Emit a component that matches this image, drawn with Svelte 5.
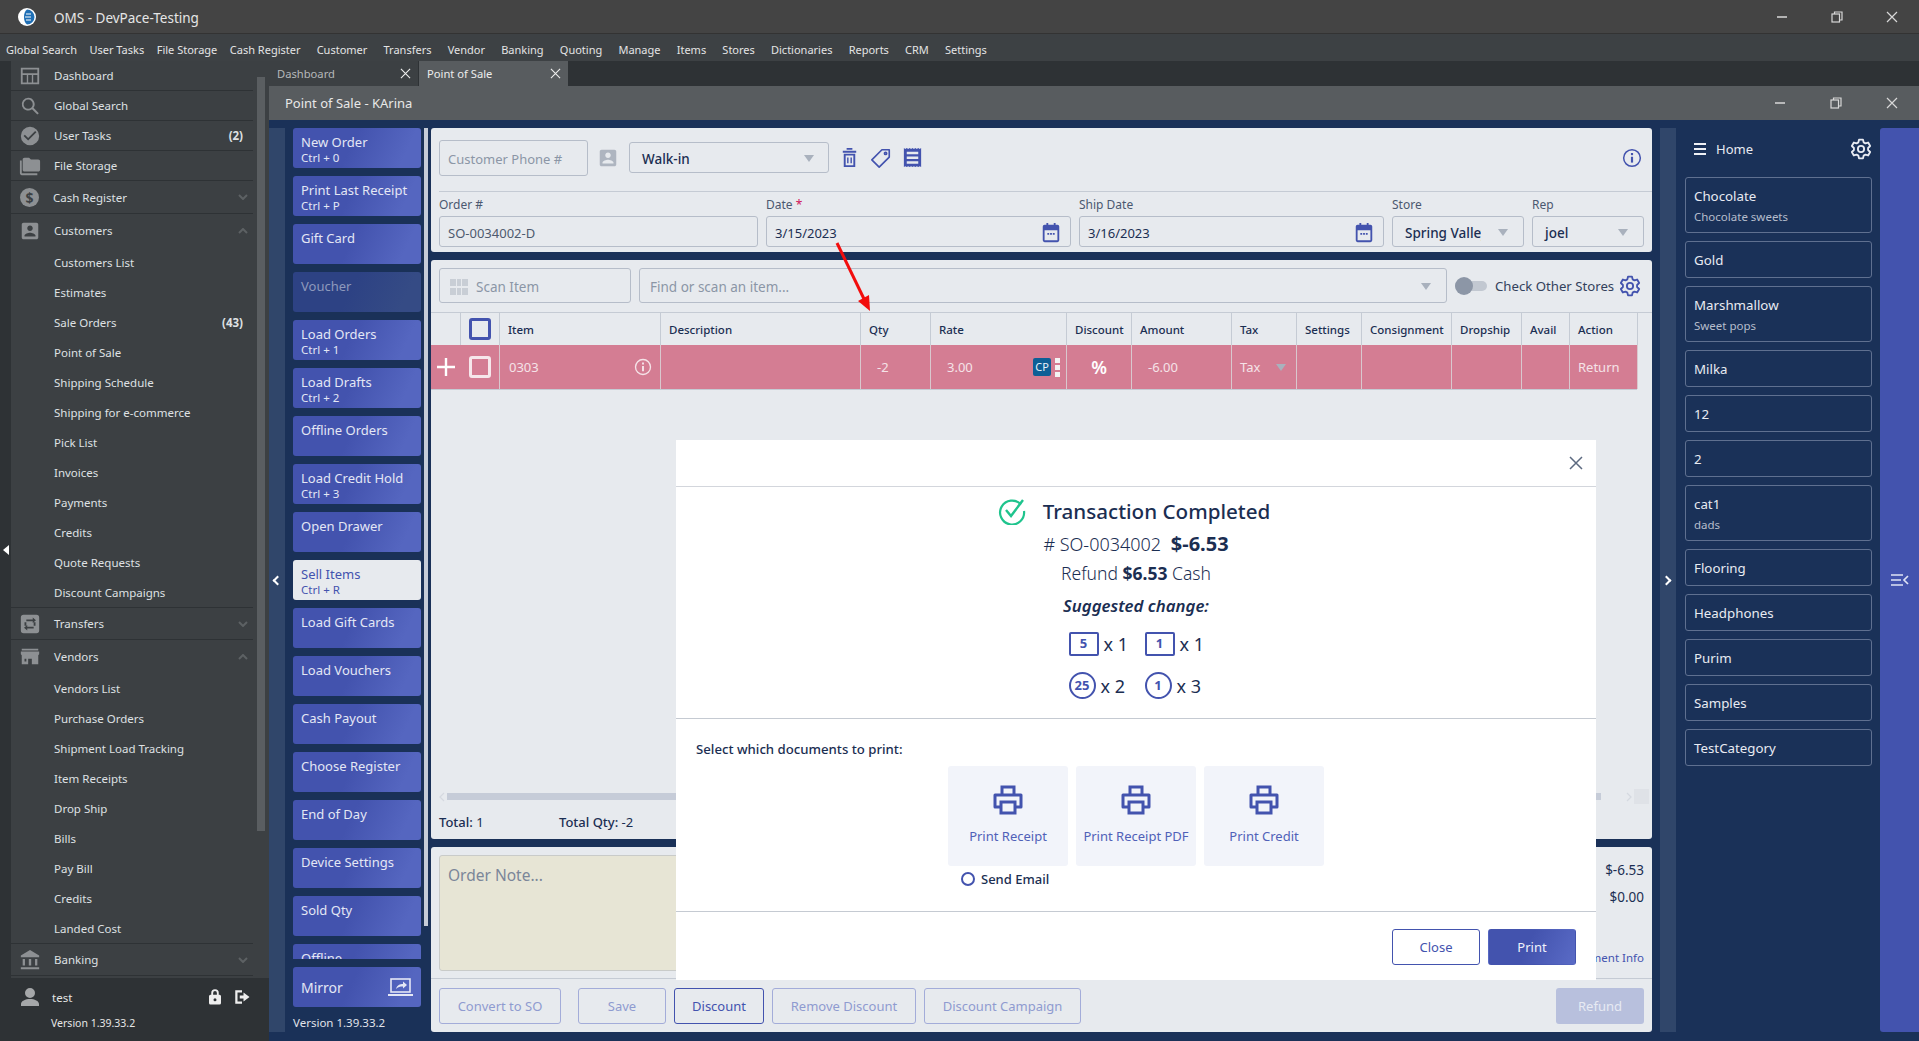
<script>
	const menu = ['Global Search','User Tasks','File Storage','Cash Register','Customer','Transfers','Vendor','Banking','Quoting','Manage','Items','Stores','Dictionaries','Reports','CRM','Settings'];

	const icons = {
		search: 'M10 3a7 7 0 1 0 4.2 12.6L20 21.4l1.6-1.6-5.8-5.8A7 7 0 0 0 10 3zm0 2a5 5 0 1 1 0 10 5 5 0 0 1 0-10z',
		check: 'M12 2a10 10 0 1 0 0 20 10 10 0 0 0 0-20zm-2 15l-5-5 1.4-1.4 3.6 3.6 7.6-7.6L19 8z',
		folder: 'M3 6H1v14c0 1.1.9 2 2 2h17v-2H3zM21 5h-8l-2-2H6C4.9 3 4 3.9 4 5v11c0 1.1.9 2 2 2h15c1.1 0 2-.9 2-2V7c0-1.1-.9-2-2-2z',
		person: 'M3 5v14c0 1.1.9 2 2 2h14c1.1 0 2-.9 2-2V5c0-1.1-.9-2-2-2H5C3.9 3 3 3.9 3 5zm12 4c0 1.7-1.3 3-3 3s-3-1.3-3-3 1.3-3 3-3 3 1.3 3 3zm-9 8c0-2 4-3.1 6-3.1s6 1.1 6 3.1v1H6z',
		dash: 'M2 3h20v18H2zm2 2v4h16V5zm0 6v8h4.5v-8zm6 0v8h4v-8zm5.500 0v8H20v-8z',
		transfer: 'M5 2h14a3 3 0 0 1 3 3v14a3 3 0 0 1-3 3H5a3 3 0 0 1-3-3V5a3 3 0 0 1 3-3zm3 5v2h7v2l3.500-3L15 5v2zm-2 3v4h2v-4zm10 0v4h2v-4zm-7 3l-3.500 3L9 19v-2h7v-2H9z',
		store: 'M3 3h18v2H3zm-1 3h20v3l-1 1v10h-7v-6H10v6H3V10L2 9zm4 8v3h2v-3z',
		bank: 'M12 1L2 7v2h20V7zM4 11v7h2.500v-7zm6.700 0v7h2.600v-7zm6.800 0v7H20v-7zM2 20v2h20v-2z',
		user: 'M12 3a5 5 0 1 1 0 10 5 5 0 0 1 0-10zm0 11c4.400 0 9 2 9 5v2H3v-2c0-3 4.600-5 9-5z',
		lock: 'M18 9h-1V6.500a5 5 0 0 0-10 0V9H6a2 2 0 0 0-2 2v9a2 2 0 0 0 2 2h12a2 2 0 0 0 2-2v-9a2 2 0 0 0-2-2zM9.500 6.500a2.500 2.500 0 0 1 5 0V9h-5zM12 17.500a2 2 0 1 1 0-4 2 2 0 0 1 0 4z',
		logout: 'M3 3h9v3H6v12h6v3H3zm11 3l8 6-8 6v-4H9v-4h5z',
		trash: 'M5 5h14v2H5zm4-3h6v2H9zM6 8h12v14H6zm2 2v10h8V10zm1.500 2h1.500v6H9.500zm3.500 0h1.500v6H13z',
		receipt: 'M3 2l1.500 1L6 2l1.500 1L9 2l1.500 1L12 2l1.500 1L15 2l1.500 1L18 2l1.500 1L21 2v20l-1.500-1-1.500 1-1.500-1-1.500 1-1.500-1-1.500 1-1.500-1L9 22l-1.500-1L6 22l-1.500-1L3 22zm3 4v2.500h12V6zm0 5v2.500h12V11zm0 5v2.500h12V16z',
		cal: 'M7 1h2v2h6V1h2v2h2a2 2 0 0 1 2 2v15a2 2 0 0 1-2 2H5a2 2 0 0 1-2-2V5a2 2 0 0 1 2-2h2zM5 9v11h14V9zm3 3h2v2H8zm3 0h2v2h-2zm3 0h2v2h-2z'
	};

	function gearPath(cx, cy, outer, inner, teeth) {
		const pts = [];
		const step = (Math.PI * 2) / teeth;
		for (let i = 0; i < teeth; i++) {
			const a = i * step - Math.PI / 2;
			for (const [off, r] of [[-0.36, inner], [-0.2, outer], [0.2, outer], [0.36, inner]]) {
				pts.push((cx + r * Math.cos(a + off * step)).toFixed(2) + ' ' + (cy + r * Math.sin(a + off * step)).toFixed(2));
			}
		}
		return 'M' + pts.join('L') + 'Z';
	}
	const gear = gearPath(12, 12, 10.5, 7.8, 6);

	const topRows = [
		{ label: 'Dashboard', icon: 'dash' },
		{ label: 'Global Search', icon: 'search' },
		{ label: 'User Tasks', icon: 'check', badge: '(2)' },
		{ label: 'File Storage', icon: 'folder' }
	];
	const customers = ['Customers List','Estimates','Sale Orders','Point of Sale','Shipping Schedule','Shipping for e-commerce','Pick List','Invoices','Payments','Credits','Quote Requests','Discount Campaigns'];
	const vendors = ['Vendors List','Purchase Orders','Shipment Load Tracking','Item Receipts','Drop Ship','Bills','Pay Bill','Credits','Landed Cost'];

	const actions = [
		{ t: 'New Order', s: 'Ctrl + 0' },
		{ t: 'Print Last Receipt', s: 'Ctrl + P' },
		{ t: 'Gift Card' },
		{ t: 'Voucher', off: true },
		{ t: 'Load Orders', s: 'Ctrl + 1' },
		{ t: 'Load Drafts', s: 'Ctrl + 2' },
		{ t: 'Offline Orders' },
		{ t: 'Load Credit Hold', s: 'Ctrl + 3' },
		{ t: 'Open Drawer' },
		{ t: 'Sell Items', s: 'Ctrl + R', on: true },
		{ t: 'Load Gift Cards' },
		{ t: 'Load Vouchers' },
		{ t: 'Cash Payout' },
		{ t: 'Choose Register' },
		{ t: 'End of Day' },
		{ t: 'Device Settings' },
		{ t: 'Sold Qty' },
		{ t: 'Offline' }
	];

	const columns = ['Item','Description','Qty','Rate','Discount','Amount','Tax','Settings','Consignment','Dropship','Avail','Action'];

	const categories = [
		{ t: 'Chocolate', s: 'Chocolate sweets' },
		{ t: 'Gold' },
		{ t: 'Marshmallow', s: 'Sweet pops' },
		{ t: 'Milka' },
		{ t: '12' },
		{ t: '2' },
		{ t: 'cat1', s: 'dads' },
		{ t: 'Flooring' },
		{ t: 'Headphones' },
		{ t: 'Purim' },
		{ t: 'Samples' },
		{ t: 'TestCategory' }
	];

	const prints = ['Print Receipt','Print Receipt PDF','Print Credit'];
</script>

{#snippet icon(name, size, cls)}
	<svg class={cls} width={size} height={size} viewBox="0 0 24 24"><path fill="currentColor" fill-rule="evenodd" d={icons[name]} /></svg>
{/snippet}

{#snippet gearIcon(size, cls)}
	<svg class={cls} width={size} height={size} viewBox="0 0 24 24" fill="none" stroke="currentColor" stroke-width="2" stroke-linejoin="round"><path d={gear} /><circle cx="12" cy="12" r="3.400" /></svg>
{/snippet}

{#snippet info(size, cls)}
	<svg class={cls} width={size} height={size} viewBox="0 0 24 24" fill="none" stroke="currentColor" stroke-width="1.800"><circle cx="12" cy="12" r="10" /><path d="M12 10.500v7" stroke-width="2.600" /><path d="M12 6v2.600" stroke-width="2.600" /></svg>
{/snippet}

{#snippet winControls()}
	<div class="win-controls">
		<svg width="14" height="14" viewBox="0 0 14 14"><path d="M2 7h10" stroke="currentColor" stroke-width="1.500" /></svg>
		<svg width="14" height="14" viewBox="0 0 14 14" fill="none" stroke="currentColor" stroke-width="1.200"><rect x="2" y="4" width="7.500" height="8" /><path d="M4.500 4V2h7.500v8h-2.500" /></svg>
		<svg width="14" height="14" viewBox="0 0 14 14"><path d="M2 2l10 10M12 2L2 12" stroke="currentColor" stroke-width="1.200" /></svg>
	</div>
{/snippet}

{#snippet chevron(up)}
	<svg class="chev" width="10" height="6" viewBox="0 0 10 6" fill="none" stroke="currentColor" stroke-width="2"><path d={up ? 'M1 5l4-4 4 4' : 'M1 1l4 4 4-4'} /></svg>
{/snippet}

<div class="app">
	<header class="titlebar">
		<svg class="logo" width="18" height="18" viewBox="0 0 18 18"><circle cx="9" cy="9" r="9" fill="#fff" /><path d="M9 1.500a7.500 7.500 0 0 1 0 15c-2-1.500-3-4-3-7.500S7 3 9 1.500z" fill="#1f6fb5" /><path d="M8 6h5M7 9h6M8 12h5" stroke="#fff" stroke-width="1.200" /></svg>
		<span class="app-name">OMS - DevPace-Testing</span>
		{@render winControls()}
	</header>

	<nav class="menubar">
		{#each menu as m}<span>{m}</span>{/each}
	</nav>

	<div class="shell">
		<aside class="nav">
			<div class="nav-top">
				<div class="nav-strip"><span class="strip-arrow"></span></div>
				<div class="nav-list">
					{#each topRows as r}
						<div class="row">
							{@render icon(r.icon, 22, 'row-icon')}
							<span class="row-label">{r.label}</span>
							{#if r.badge}<b class="badge">{r.badge}</b>{/if}
						</div>
					{/each}
					<div class="row group">
						<span class="dollar">$</span>
						<span class="row-label">Cash Register</span>
						{@render chevron(false)}
					</div>
					<div class="row group open">
						{@render icon('person', 22, 'row-icon')}
						<span class="row-label">Customers</span>
						{@render chevron(true)}
					</div>
					{#each customers as c}
						<div class="sub">
							<span>{c}</span>
							{#if c === 'Sale Orders'}<b class="badge">(43)</b>{/if}
						</div>
					{/each}
					<div class="row group top-line">
						{@render icon('transfer', 22, 'row-icon')}
						<span class="row-label">Transfers</span>
						{@render chevron(false)}
					</div>
					<div class="row group open">
						{@render icon('store', 22, 'row-icon')}
						<span class="row-label">Vendors</span>
						{@render chevron(true)}
					</div>
					{#each vendors as v}
						<div class="sub"><span>{v}</span></div>
					{/each}
					<div class="row group top-line">
						{@render icon('bank', 22, 'row-icon')}
						<span class="row-label">Banking</span>
						{@render chevron(false)}
					</div>
				</div>
				<div class="nav-scroll"><div class="nav-thumb"></div></div>
			</div>
			<div class="nav-foot">
				<div class="foot-user">
					{@render icon('user', 24, 'foot-avatar')}
					<span class="foot-name">test</span>
					{@render icon('lock', 18, 'foot-action')}
					{@render icon('logout', 18, 'foot-action')}
				</div>
				<div class="foot-version">Version 1.39.33.2</div>
			</div>
		</aside>

		<section class="window">
			<div class="tabs">
				<div class="tab">Dashboard<svg width="11" height="11" viewBox="0 0 12 12"><path d="M1 1l10 10M11 1L1 11" stroke="currentColor" stroke-width="1.200" /></svg></div>
				<div class="tab active">Point of Sale<svg width="11" height="11" viewBox="0 0 12 12"><path d="M1 1l10 10M11 1L1 11" stroke="currentColor" stroke-width="1.200" /></svg></div>
			</div>
			<div class="window-title">
				<span>Point of Sale - KArina</span>
				{@render winControls()}
			</div>

			<div class="pos">
				<div class="side-strip"><i class="chev-l"></i></div>

				<div class="actions">
					<div class="action-list">
						{#each actions as a}
							<div class="action" class:off={a.off} class:on={a.on}>
								<span class="a-title">{a.t}</span>
								{#if a.s}<span class="a-sub">{a.s}</span>{/if}
							</div>
						{/each}
					</div>
					<div class="action mirror">
						<span>Mirror</span>
						<svg width="25" height="20" viewBox="0 0 25 20" fill="none" stroke="currentColor" stroke-width="1.600"><rect x="3" y="2" width="19" height="13" /><path d="M0 18h25" stroke-width="2" /><path d="M8 12c1-4 4-5 7-5V4.500l4 3.500-4 3.500V9.500c-3 0-5 .5-7 2.500z" fill="currentColor" stroke="none" /></svg>
					</div>
					<div class="pos-version">Version 1.39.33.2</div>
				</div>

				<div class="action-scroll"><div></div></div>

				<main class="main">
					<div class="card order-card">
						<div class="customer-row">
							<div class="input phone ph">Customer Phone #</div>
							{@render icon('person', 22, 'contact')}
							<div class="input walkin"><span>Walk-in</span><i class="caret"></i></div>
							{@render icon('trash', 23, 'tool')}
							<svg class="tool" width="22" height="22" viewBox="0 0 24 24" fill="none" stroke="currentColor" stroke-width="1.800" stroke-linejoin="round"><path d="M13 3h8v8L10 22l-8-8z" /><circle cx="17" cy="7" r="1.200" /></svg>
							{@render icon('receipt', 23, 'tool')}
							<span class="spacer"></span>
							{@render info(20, 'info-top')}
						</div>
						<div class="fields">
							<div class="field f-order">
								<label>Order #</label>
								<div class="input">SO-0034002-D</div>
							</div>
							<div class="field f-date">
								<label>Date <em>*</em></label>
								<div class="input"><span class="strong">3/15/2023</span>{@render icon('cal', 22, 'cal')}</div>
							</div>
							<div class="field f-date">
								<label>Ship Date</label>
								<div class="input"><span class="strong">3/16/2023</span>{@render icon('cal', 22, 'cal')}</div>
							</div>
							<div class="field f-store">
								<label>Store</label>
								<div class="input sel"><span class="clip">Spring Valley</span><i class="caret"></i></div>
							</div>
							<div class="field f-rep">
								<label>Rep</label>
								<div class="input sel"><span>joel</span><i class="caret"></i></div>
							</div>
						</div>
					</div>

					<div class="card items-card">
						<div class="scan-row">
							<div class="input scan ph">
								<svg width="18" height="16" viewBox="0 0 18 16" fill="none" stroke="#aab2bd" stroke-width="1"><path d="M1 0v7M3 0v7M5 0v7M8 0v7M10 0v7M13 0v7M15 0v7M17 0v7M1 9v7M3 9v7M5 9v7M8 9v7M10 9v7M13 9v7M15 9v7M17 9v7" /></svg>
								Scan Item
							</div>
							<div class="input find ph"><span>Find or scan an item...</span><i class="caret"></i></div>
							<div class="toggle"><span></span></div>
							<span class="check-stores">Check Other Stores</span>
							{@render gearIcon(22, 'tool gear')}
						</div>

						<div class="table">
							<div class="t-row t-head">
								<div class="cell"></div>
								<div class="cell box-cell"><span class="chk"></span></div>
								{#each columns as c}<div class="cell">{c}</div>{/each}
							</div>
							<div class="t-row t-item">
								<div class="cell"><svg width="18" height="18" viewBox="0 0 18 18"><path d="M9 0v18M0 9h18" stroke="#fff" stroke-width="2.400" /></svg></div>
								<div class="cell box-cell"><span class="chk light"></span></div>
								<div class="cell spread">0303{@render info(18, 'info-row')}</div>
								<div class="cell"></div>
								<div class="cell indent">-2</div>
								<div class="cell spread indent">3.00<span class="cp-wrap"><span class="cp">CP</span><span class="dots"><i></i><i></i><i></i></span></span></div>
								<div class="cell pct">%</div>
								<div class="cell indent">-6.00</div>
								<div class="cell tax">Tax<i class="caret"></i></div>
								<div class="cell"></div>
								<div class="cell"></div>
								<div class="cell"></div>
								<div class="cell"></div>
								<div class="cell">Return</div>
							</div>
						</div>

						<div class="h-scroll">
							<svg width="6" height="10" viewBox="0 0 6 10" fill="none" stroke="#d5d9e0" stroke-width="1.200"><path d="M5 1L1 5l4 4" /></svg>
							<div class="h-thumb"></div>
							<svg width="6" height="10" viewBox="0 0 6 10" fill="none" stroke="#d5d9e0" stroke-width="1.200"><path d="M1 1l4 4-4 4" /></svg>
							<div class="h-corner"></div>
						</div>

						<div class="totals-row">
							<span><b>Total:</b> 1</span>
							<span><b>Total Qty:</b> -2</span>
						</div>
					</div>

					<div class="card note-card">
						<div class="note-row">
							<div class="note">Order Note...</div>
							<div class="sums">
								<span>$-6.53</span>
								<span>$0.00</span>
								<a>Payment Info</a>
							</div>
						</div>
						<div class="btn-row">
							<button class="btn ghost w-convert">Convert to SO</button>
							<button class="btn ghost w-save">Save</button>
							<button class="btn outline w-discount">Discount</button>
							<button class="btn ghost w-remove">Remove Discount</button>
							<button class="btn ghost w-campaign">Discount Campaign</button>
							<span class="spacer"></span>
							<button class="btn refund">Refund</button>
						</div>
					</div>
				</main>

				<div class="side-strip right"><i class="chev-r"></i></div>

				<aside class="cats">
					<div class="cats-head">
						<span class="burger"><i></i><i></i><i></i></span>
						<span class="home">Home</span>
						{@render gearIcon(22, 'cats-gear')}
					</div>
					<div class="cat-list">
						{#each categories as c}
							<div class="cat" class:tall={c.s}>
								<span>{c.t}</span>
								{#if c.s}<small>{c.s}</small>{/if}
							</div>
						{/each}
					</div>
				</aside>

				<div class="far">
					<svg width="18" height="14" viewBox="0 0 18 14" fill="none" stroke="#dfe3f5" stroke-width="1.700"><path d="M0 2h12M0 7h10M0 12h12M17 3l-4 4 4 4" /></svg>
				</div>
			</div>
		</section>
	</div>

	<svg class="red-arrow" width="50" height="76" viewBox="0 0 50 76">
		<path d="M3 2l28 58" stroke="#f20d0d" stroke-width="3" />
		<path d="M36 70L24 60l11-6z" fill="#f20d0d" />
	</svg>

	<div class="modal">
		<div class="modal-head">
			<svg width="16" height="16" viewBox="0 0 16 16"><path d="M2 2l12 12M14 2L2 14" stroke="#5c6a80" stroke-width="1.500" /></svg>
		</div>
		<div class="modal-body">
			<div class="done">
				<svg width="28" height="28" viewBox="0 0 28 28" fill="none" stroke="#1fc48d" stroke-width="2.200"><path d="M23 7.500A12 12 0 1 0 26 14" /><path d="M8 13l5 6L25 3" stroke-width="2.400" /></svg>
				<span>Transaction Completed</span>
			</div>
			<div class="so"># SO-0034002 <b>$-6.53</b></div>
			<div class="refund-line">Refund <b>$6.53</b> Cash</div>
			<div class="suggested">Suggested change:</div>
			<div class="cash">
				<div class="cash-item"><span class="bill">5</span>x 1</div>
				<div class="cash-item"><span class="bill">1</span>x 1</div>
			</div>
			<div class="cash coins">
				<div class="cash-item"><span class="coin">25</span>x 2</div>
				<div class="cash-item"><span class="coin">1</span>x 3</div>
			</div>
		</div>
		<div class="modal-docs">
			<div class="docs-label">Select which documents to print:</div>
			<div class="tiles">
				{#each prints as p}
					<div class="tile">
						<svg width="32" height="32" viewBox="0 0 32 32" fill="none" stroke="#4353ae" stroke-width="3"><path d="M10 11V3h12v8" /><path d="M9 23H3V11h26v12h-6" stroke-linejoin="round" /><rect x="9" y="18" width="14" height="11" /></svg>
						<span>{p}</span>
					</div>
				{/each}
			</div>
			<div class="send"><span class="radio"></span>Send Email</div>
		</div>
		<div class="modal-foot">
			<button class="btn m-close">Close</button>
			<button class="btn m-print">Print</button>
		</div>
	</div>
</div>

<style>
	:global(body) {
		margin: 0;
		background: #1a3158;
		overflow: hidden;
	}

	.app {
		position: relative;
		height: 1041px;
		display: grid;
		grid-template-rows: 34px 27px 1fr;
		font-family: 'Noto Sans', sans-serif;
		font-size: 13px;
		color: #1b2e52;
		overflow: hidden;
	}

	.titlebar {
		background: #444444;
		border-bottom: 1px solid #333;
		box-sizing: border-box;
		display: flex;
		align-items: center;
		padding-left: 18px;
		color: #e6e6e6;
	}
	.app-name {
		margin-left: 18px;
		font-size: 13.500px;
		padding-top: 2px;
	}
	.win-controls {
		margin-left: auto;
		display: flex;
		gap: 41px;
		padding-right: 20px;
		color: #d8d8d8;
	}

	.menubar {
		background: #3d4144;
		display: flex;
		align-items: center;
		gap: 12.500px;
		padding: 4px 0 0 6px;
		box-sizing: border-box;
		font-size: 11px;
		color: #e4e4e4;
		white-space: nowrap;
	}
	.menubar span:nth-child(n + 5) {
		margin-left: 3.700px;
	}

	.shell {
		display: grid;
		grid-template-columns: 269px 1fr;
		min-height: 0;
	}

	.nav {
		display: flex;
		flex-direction: column;
		background: #2e3235;
		min-height: 0;
	}
	.nav-top {
		height: 917px;
		display: flex;
		overflow: hidden;
	}
	.nav-strip {
		width: 11px;
		display: flex;
		align-items: flex-start;
	}
	.strip-arrow {
		margin: 484px 0 0 3px;
		border: 5px solid transparent;
		border-right: 6px solid #fff;
		border-left: 0;
	}
	.nav-list {
		width: 246px;
		background: #3c4043;
		font-size: 11.500px;
		color: #dfe1e3;
	}
	.nav-scroll {
		width: 12px;
		background: #3c4043;
		padding: 16px 4px 0 0;
		box-sizing: border-box;
	}
	.nav-thumb {
		height: 754px;
		background: #5a5e61;
	}

	.row {
		height: 30px;
		width: 242px;
		box-sizing: border-box;
		border-bottom: 1px solid #2e3235;
		display: flex;
		align-items: center;
		padding: 0 10px 0 8px;
	}
	.row.group {
		height: 33px;
	}
	.row.open {
		border-bottom: 0;
	}
	.row.top-line {
		border-top: 1px solid #2e3235;
	}
	.row-icon {
		color: #8d9093;
		flex: none;
	}
	.row-label {
		margin-left: 13px;
	}
	.badge {
		margin-left: auto;
		font-weight: 700;
	}
	.chev {
		margin-left: auto;
		color: #5d6164;
		margin-right: -5px;
	}
	.dollar {
		width: 19px;
		height: 19px;
		margin: 0 1px;
		border-radius: 50%;
		background: #8d9093;
		color: #3c4043;
		font-weight: 700;
		font-size: 14px;
		line-height: 19px;
		text-align: center;
	}
	.sub {
		height: 30px;
		width: 242px;
		display: flex;
		align-items: center;
		padding: 0 10px 0 43px;
		box-sizing: border-box;
	}

	.nav-foot {
		flex: 1;
		margin-top: 2px;
		color: #e6e6e6;
	}
	.foot-user {
		display: flex;
		align-items: center;
		padding: 5px 18px 0 18px;
		gap: 8px;
		font-size: 11.500px;
	}
	.foot-avatar {
		color: #a5a7a9;
		flex: none;
	}
	.foot-name {
		margin-right: auto;
		margin-left: 2px;
	}
	.foot-action {
		color: #eee;
		margin-left: 1px;
	}
	.foot-version {
		font-size: 10.500px;
		padding: 7px 0 0 51px;
	}

	.window {
		display: grid;
		grid-template-rows: 25px 34px 1fr;
		min-height: 0;
		min-width: 0;
	}
	.tabs {
		display: flex;
		gap: 1px;
		background: #2e3235;
	}
	.tab {
		width: 149px;
		box-sizing: border-box;
		display: flex;
		align-items: center;
		justify-content: space-between;
		padding: 0 7px 0 8px;
		font-size: 11.200px;
		color: #b5b8ba;
		background: #3c4043;
	}
	.tab.active {
		background: #585c5f;
		color: #eceded;
	}
	.tab svg {
		color: #eee;
	}
	.window-title {
		background: #585c5f;
		display: flex;
		align-items: center;
		padding-left: 16px;
		font-size: 13px;
		color: #e8e8e8;
	}
	.window-title .win-controls {
		gap: 42px;
	}

	.pos {
		background: #1a3158;
		display: flex;
		padding: 8px 0 9px;
		min-height: 0;
		box-sizing: border-box;
	}
	.side-strip {
		width: 16px;
		flex: none;
		background: #30466a;
		display: flex;
		align-items: center;
		justify-content: center;
	}
	.side-strip.right {
		margin-left: 8px;
	}
	.side-strip i {
		width: 5px;
		height: 5px;
		border: solid #fff;
		border-width: 2px 0 0 2px;
	}
	.chev-l {
		transform: rotate(-45deg);
	}
	.chev-r {
		transform: rotate(135deg);
		margin-right: 3px;
	}

	.actions {
		width: 128px;
		flex: none;
		margin-left: 8px;
		display: flex;
		flex-direction: column;
		color: #e4e7f5;
	}
	.action-list {
		height: 831px;
		overflow: hidden;
		display: flex;
		flex-direction: column;
		gap: 8px;
	}
	.action {
		height: 40px;
		flex: none;
		box-sizing: border-box;
		border-radius: 3px;
		padding: 5px 8px 0;
		background: linear-gradient(115deg, #4353ae 45%, #5566c0 85%);
		display: flex;
		flex-direction: column;
	}
	.a-title {
		font-size: 13px;
		line-height: 18px;
	}
	.a-sub {
		font-size: 11.500px;
		line-height: 14px;
	}
	.action.off {
		background: linear-gradient(115deg, #2d4284 45%, #354b85 85%);
		color: #8d99bc;
	}
	.action.on {
		background: #e7eaee;
		color: #4353ae;
	}
	.mirror {
		margin-top: 8px;
		padding: 0 8px;
		flex-direction: row;
		align-items: center;
		justify-content: space-between;
		font-size: 14px;
	}
	.pos-version {
		margin-top: 8px;
		font-size: 11.500px;
		color: #e0e3ea;
	}
	.action-scroll {
		width: 10px;
		flex: none;
		padding-left: 3px;
		box-sizing: border-box;
	}
	.action-scroll div {
		width: 4px;
		height: 798px;
		background: #c6ccd8;
	}

	.main {
		width: 1221px;
		flex: none;
		display: flex;
		flex-direction: column;
		gap: 8px;
	}
	.card {
		background: #e7eaee;
		border-radius: 3px;
		box-sizing: border-box;
	}
	.input {
		height: 31px;
		box-sizing: border-box;
		border: 1px solid #b6bdc9;
		border-radius: 3px;
		display: flex;
		align-items: center;
		padding: 2px 8px 0;
		font-size: 13px;
		color: #4e5a6e;
		white-space: nowrap;
	}
	.ph {
		color: #8b96a6;
	}
	.caret {
		border: 5px solid transparent;
		border-top: 7px solid #a9b1bd;
		border-bottom: 0;
		margin-left: auto;
		flex: none;
	}
	.spacer {
		flex: 1;
	}

	.order-card {
		height: 124px;
		padding: 0 8px;
	}
	.customer-row {
		height: 64px;
		display: flex;
		align-items: center;
		padding-bottom: 4px;
		box-sizing: border-box;
		border-bottom: 1px solid #c5cbd4;
		margin-right: -8px;
		padding-right: 10px;
	}
	.phone {
		width: 149px;
		height: 36px;
	}
	.contact {
		color: #aeb5c0;
		margin: 0 0 0 9px;
	}
	.walkin {
		width: 200px;
		margin: 0 9px 0 10px;
		padding: 2px 14px 0 12px;
		font-size: 13.500px;
		font-weight: 500;
		color: #1b2e52;
	}
	.tool {
		color: #4353ae;
		margin-right: 9px;
		flex: none;
	}
	.info-top {
		color: #4353ae;
	}
	.fields {
		display: flex;
		gap: 8px;
	}
	.field label {
		display: block;
		height: 24px;
		line-height: 26px;
		font-size: 12px;
		color: #4b5870;
	}
	.field em {
		color: #d0165a;
		font-style: normal;
	}
	.f-order {
		width: 319px;
	}
	.f-date {
		width: 305px;
	}
	.f-store {
		width: 132px;
	}
	.f-rep {
		width: 112px;
	}
	.strong {
		color: #1b2e52;
	}
	.cal {
		margin-left: auto;
		color: #4353ae;
	}
	.sel {
		padding: 2px 15px 0 12px;
		font-size: 13.500px;
		color: #1b2e52;
		font-weight: 500;
	}
	.clip {
		width: 76px;
		overflow: hidden;
	}

	.items-card {
		height: 579px;
		display: flex;
		flex-direction: column;
	}
	.scan-row {
		height: 35px;
		margin: 8px 8px 9px;
		display: flex;
		align-items: center;
		flex: none;
	}
	.scan-row .input {
		height: 35px;
		font-size: 13.500px;
	}
	.scan {
		width: 192px;
		gap: 8px;
		padding-left: 10px;
	}
	.find {
		width: 808px;
		margin: 0 8px;
		padding-left: 10px;
		padding-right: 15px;
	}
	.toggle {
		width: 32px;
		height: 10px;
		border-radius: 5px;
		background: #c2c8d1;
		position: relative;
		flex: none;
		margin-right: 8px;
	}
	.toggle span {
		position: absolute;
		left: 0;
		top: -4px;
		width: 18px;
		height: 18px;
		border-radius: 50%;
		background: #8c96a6;
	}
	.check-stores {
		font-size: 13.200px;
		color: #33415c;
		white-space: nowrap;
	}
	.gear {
		margin: 0 0 0 5px;
	}

	.t-row {
		display: grid;
		grid-template-columns: 30px 39px 161px 200px 70px 136px 65px 100px 65px 65px 90px 70px 48px 68px;
	}
	.t-head {
		height: 32px;
		border-top: 1px solid #c5cbd4;
		box-sizing: content-box;
		font-size: 11.500px;
		font-weight: 500;
		color: #1b2e52;
	}
	.cell {
		border-right: 1px solid #c5cbd4;
		display: flex;
		align-items: center;
		padding-left: 8px;
		box-sizing: border-box;
		min-width: 0;
	}
	.t-head .cell:first-child,
	.t-item .cell:first-child {
		padding: 0;
		justify-content: center;
	}
	.t-item .cell:first-child {
		border-right: 0;
	}
	.box-cell {
		padding: 0;
		justify-content: center;
	}
	.chk {
		border: 3px solid #4353ae;
		border-radius: 3px;
		box-sizing: content-box;
		width: 16px;
		height: 16px;
	}
	.chk.light {
		border-color: #f6e7eb;
	}
	.t-item {
		height: 45px;
		width: 1206px;
		background: #d47d93;
		color: #f5e3e8;
		font-size: 13px;
		border-bottom: 1px solid #c5cbd4;
		box-sizing: border-box;
	}
	.t-item .cell {
		border-color: #d9c8ce;
	}
	.spread {
		justify-content: space-between;
		padding: 0 8px 0 9px;
	}
	.info-row {
		color: #f5e3e8;
	}
	.indent {
		padding-left: 16px;
	}
	.cp-wrap {
		display: flex;
		align-items: center;
		gap: 4px;
		margin-right: -2px;
	}
	.cp {
		background: #0d5f96;
		color: #e6f2fa;
		font-size: 11px;
		width: 18px;
		height: 18px;
		line-height: 18px;
		text-align: center;
		border-radius: 2px;
	}
	.dots {
		display: flex;
		flex-direction: column;
		gap: 2px;
	}
	.dots i {
		width: 5px;
		height: 5px;
		background: #f4f4f4;
	}
	.pct {
		justify-content: center;
		padding: 0;
		font-size: 18px;
		font-weight: 600;
		color: #fff;
	}
	.tax {
		padding-right: 10px;
	}

	.h-scroll {
		margin-top: auto;
		height: 15px;
		display: flex;
		align-items: center;
		padding-left: 8px;
		flex: none;
	}
	.h-thumb {
		width: 1154px;
		height: 7px;
		margin: 0 25px 0 2px;
		background: #c6ccd8;
	}
	.h-corner {
		width: 15px;
		height: 15px;
		margin-left: 2px;
		background: #dfe2e7;
	}
	.totals-row {
		height: 35px;
		flex: none;
		padding: 0 8px;
		display: flex;
		align-items: center;
		gap: 40px;
		font-size: 13px;
		box-sizing: border-box;
	}
	.totals-row b {
		font-weight: 500;
	}
	.totals-row span:first-child {
		width: 80px;
	}

	.note-card {
		height: 185px;
		display: flex;
		flex-direction: column;
	}
	.note-row {
		height: 132px;
		padding: 8px 8px 0;
		box-sizing: border-box;
		display: flex;
		justify-content: space-between;
		border-bottom: 1px solid #c5cbd4;
		flex: none;
	}
	.note {
		width: 560px;
		height: 116px;
		box-sizing: border-box;
		background: #e7e5d5;
		border: 1px solid #c9cbc9;
		border-radius: 3px;
		padding: 8px;
		font-size: 15.500px;
		color: #7b8699;
	}
	.sums {
		display: flex;
		flex-direction: column;
		align-items: flex-end;
		font-size: 13.500px;
		gap: 9px;
		margin-top: 6px;
	}
	.sums a {
		margin-top: 35px;
		font-size: 11.500px;
		color: #4353ae;
	}
	.btn-row {
		display: flex;
		padding: 9px 8px 0;
		gap: 8px;
	}
	.btn {
		height: 36px;
		box-sizing: border-box;
		border-radius: 3px;
		font-family: inherit;
		font-size: 13px;
		padding: 0;
		background: none;
		border: 1px solid transparent;
	}
	.ghost {
		border-color: #a3acd9;
		color: #8f9bd0;
	}
	.outline {
		border-color: #4353ae;
		color: #4353ae;
	}
	.w-convert {
		width: 122px;
		margin-right: 9px;
	}
	.w-save {
		width: 88px;
	}
	.w-discount {
		width: 90px;
	}
	.w-remove {
		width: 144px;
	}
	.w-campaign {
		width: 157px;
	}
	.refund {
		width: 88px;
		background: #b8c0dd;
		color: #e7eaf3;
	}

	.cats {
		width: 204px;
		flex: none;
		color: #e8ebf2;
		padding: 0 8px 0 9px;
		box-sizing: border-box;
	}
	.cats-head {
		height: 49px;
		display: flex;
		align-items: center;
		padding: 0 0 8px 9px;
		box-sizing: border-box;
	}
	.burger {
		display: flex;
		flex-direction: column;
		gap: 3px;
		margin-right: 10px;
	}
	.burger i {
		width: 12px;
		height: 2px;
		background: #eef0f5;
	}
	.home {
		font-size: 13px;
	}
	.cats-gear {
		margin-left: auto;
	}
	.cat-list {
		display: flex;
		flex-direction: column;
		gap: 8px;
	}
	.cat {
		height: 37px;
		box-sizing: border-box;
		border: 1px solid #5f7090;
		border-radius: 3px;
		padding: 0 8px;
		display: flex;
		flex-direction: column;
		justify-content: center;
		font-size: 13.300px;
	}
	.cat.tall {
		height: 56px;
	}
	.cat small {
		font-size: 11.500px;
		color: #b6bdcc;
		margin-top: 4px;
	}
	.far {
		flex: 1;
		background: #4353ae;
		border-radius: 3px 0 0 3px;
		display: flex;
		align-items: center;
		justify-content: center;
	}

	.red-arrow {
		position: absolute;
		left: 834px;
		top: 241px;
	}

	.modal {
		position: absolute;
		left: 676px;
		top: 440px;
		width: 920px;
		height: 540px;
		background: #fff;
		display: flex;
		flex-direction: column;
		box-sizing: border-box;
	}
	.modal-head {
		height: 47px;
		flex: none;
		box-sizing: border-box;
		border-bottom: 1px solid #d3d6dc;
		display: flex;
		align-items: center;
		justify-content: flex-end;
		padding-right: 12px;
	}
	.modal-body {
		height: 232px;
		flex: none;
		box-sizing: border-box;
		border-bottom: 1px solid #c5cad2;
		display: flex;
		flex-direction: column;
		align-items: center;
		padding-top: 9px;
	}
	.done {
		display: flex;
		align-items: center;
		gap: 17px;
		font-size: 20.600px;
		font-weight: 500;
		line-height: 30px;
		margin-right: 4px;
	}
	.so {
		font-size: 18px;
		line-height: 24px;
		margin-top: 6px;
		font-weight: 300;
	}
	.so b {
		font-size: 20px;
		font-weight: 700;
		margin-left: 5px;
	}
	.refund-line {
		font-size: 17.500px;
		line-height: 24px;
		margin-top: 5px;
		font-weight: 300;
	}
	.refund-line b {
		font-weight: 700;
	}
	.suggested {
		font-size: 16.800px;
		font-weight: 600;
		font-style: italic;
		line-height: 22px;
		margin-top: 10px;
	}
	.cash {
		display: flex;
		gap: 17px;
		margin-top: 15px;
	}
	.cash.coins {
		margin-top: 16px;
	}
	.cash-item {
		display: flex;
		align-items: center;
		gap: 5px;
		font-size: 18px;
		width: 59px;
		white-space: nowrap;
	}
	.bill {
		flex: none;
		width: 30px;
		height: 24px;
		box-sizing: border-box;
		border: 2.500px solid #4353ae;
		border-radius: 2px;
		color: #4353ae;
		font-size: 13px;
		font-weight: 700;
		line-height: 19px;
		text-align: center;
	}
	.coin {
		flex: none;
		width: 27px;
		height: 27px;
		box-sizing: border-box;
		border: 2.500px solid #4353ae;
		border-radius: 50%;
		color: #4353ae;
		font-size: 13px;
		font-weight: 700;
		line-height: 22px;
		text-align: center;
	}
	.modal-docs {
		flex: 1;
		box-sizing: border-box;
		border-bottom: 1px solid #c5cad2;
		padding: 20px 20px 0;
	}
	.docs-label {
		font-size: 13.200px;
		font-weight: 500;
		line-height: 20px;
	}
	.tiles {
		display: flex;
		justify-content: center;
		gap: 8px;
		margin-top: 7px;
	}
	.tile {
		width: 120px;
		height: 100px;
		box-sizing: border-box;
		background: #f2f4fa;
		border-radius: 3px;
		display: flex;
		flex-direction: column;
		align-items: center;
		padding-top: 18px;
		gap: 11px;
		font-size: 13px;
		color: #5061b8;
		white-space: nowrap;
	}
	.send {
		display: flex;
		align-items: center;
		gap: 6px;
		margin: 3px 0 0 265px;
		height: 20px;
		font-size: 13px;
		font-weight: 500;
	}
	.radio {
		width: 10px;
		height: 10px;
		border: 2px solid #4353ae;
		border-radius: 50%;
	}
	.modal-foot {
		height: 68px;
		flex: none;
		display: flex;
		justify-content: flex-end;
		align-items: flex-start;
		gap: 8px;
		padding: 17px 20px 0 0;
		box-sizing: border-box;
	}
	.m-close {
		width: 88px;
		border-color: #4353ae;
		color: #4353ae;
	}
	.m-print {
		width: 88px;
		background: linear-gradient(115deg, #4353ae 45%, #5a6bc6 100%);
		color: #f0f2fb;
	}
</style>
